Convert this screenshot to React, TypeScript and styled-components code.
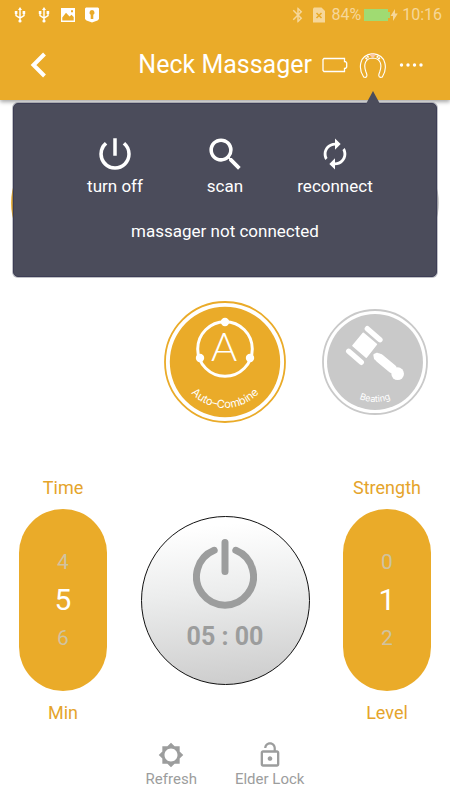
import React, { useState } from "react";
import styled, { createGlobalStyle } from "styled-components";
import {
  MdAutorenew,
  MdBluetooth,
  MdBrightness5,
  MdLockOpen,
  MdPowerSettingsNew,
  MdSearch,
} from "react-icons/md";

const AMBER = "#eaab29";
const SLATE = "#4b4c5b";
const GREY = "#9c9d9d";
const STATUS = "#f6d79a";

const GlobalStyle = createGlobalStyle`
  *, *::before, *::after { box-sizing: border-box; }
  body {
    margin: 0;
    background: #fff;
    font-family: Roboto, "Liberation Sans", sans-serif;
  }
  button {
    margin: 0;
    padding: 0;
    border: 0;
    background: none;
    color: inherit;
    font: inherit;
    cursor: pointer;
  }
  svg { display: block; flex: none; }
`;

const Screen = styled.div`
  display: flex;
  flex-direction: column;
  min-height: 100vh;
`;

const Header = styled.header`
  position: relative;
  z-index: 1;
  background: ${AMBER};
  color: #fff;
  box-shadow: 0 2px 4px rgba(0, 0, 0, 0.35);
`;

const StatusBar = styled.div`
  display: flex;
  align-items: center;
  justify-content: space-between;
  height: 30px;
  padding: 0 8px 0 12px;
`;

const Notifications = styled.div`
  display: flex;
  gap: 8px;
`;

const SystemStatus = styled.div`
  display: flex;
  align-items: center;
  color: ${STATUS};
  font-size: 16px;
  line-height: 20px;
`;

const FileBadge = styled.span`
  margin: 0 6px;
`;

const Charge = styled.span`
  display: flex;
  align-items: center;
  margin: 0 4px 0 2px;
`;

const AppBar = styled.div`
  display: flex;
  align-items: center;
  height: 70px;
  padding: 0 20px 0 23px;
`;

const Title = styled.h1`
  flex: 1;
  margin: 0 4px 0 0;
  text-align: right;
  font-size: 25px;
  line-height: 32px;
  font-weight: 400;
`;

const BarButton = styled.button`
  display: flex;
  align-items: center;
  justify-content: center;
  width: 38px;
  height: 40px;
`;

const BackButton = styled(BarButton)`
  width: 30px;
`;

const Popover = styled.section`
  position: absolute;
  top: calc(100% + 3px);
  left: 13px;
  right: 13px;
  padding: 28px 0 34px;
  border: 1px solid #3d3d55;
  border-radius: 5px;
  background: ${SLATE};
  box-shadow: 0 0 0 1px rgba(75, 76, 92, 0.35);

  &::before {
    content: "";
    position: absolute;
    right: 56px;
    bottom: 100%;
    border: solid transparent;
    border-width: 0 7px 13px;
    border-bottom-color: ${SLATE};
  }
`;

const Actions = styled.div`
  display: flex;
  justify-content: center;
`;

const ActionButton = styled.button`
  display: flex;
  flex-direction: column;
  align-items: center;
  width: 110px;
  font-size: 17px;
  line-height: 20px;
`;

const ActionIcon = styled.span`
  display: flex;
  align-items: center;
  justify-content: center;
  height: 44px;
`;

const ConnectionState = styled.p`
  margin: 24px 0 0;
  text-align: center;
  font-size: 17px;
  line-height: 22px;
`;

const Modes = styled.section`
  display: flex;
  flex-direction: column;
  gap: 37px;
  padding-top: 42px;
`;

const ModeEnds = styled.div`
  display: flex;
  align-items: center;
  justify-content: space-between;
  padding: 0 11px;
`;

const ModeRow = styled.div`
  display: grid;
  grid-template-columns: repeat(3, 1fr);
  align-items: center;
  justify-items: center;
`;

const ModeButton = styled.button<{ $column?: number }>`
  ${(p) => p.$column && `grid-column: ${p.$column};`}
  border-radius: 50%;
`;

const Controls = styled.section`
  display: flex;
  align-items: center;
  justify-content: space-between;
  padding: 53px 19px 0;
`;

const Wheel = styled.div`
  display: flex;
  flex-direction: column;
  align-items: center;
  width: 88px;
  color: #e5a42b;
  font-size: 18px;
  line-height: 24px;
`;

const WheelTrack = styled.div`
  display: flex;
  flex-direction: column;
  align-items: center;
  justify-content: center;
  width: 100%;
  height: 182px;
  margin: 9px 0 10px;
  border-radius: 44px;
  background: ${AMBER};
`;

const WheelStep = styled.button`
  width: 100%;
  color: #d0c3a0;
  font-size: 21px;
  line-height: 38px;
`;

const WheelValue = styled.output`
  color: #fff;
  font-size: 30px;
  line-height: 38px;
`;

const Dial = styled.button`
  display: flex;
  flex-direction: column;
  align-items: center;
  width: 169px;
  height: 169px;
  padding-top: 22px;
  border: 1px solid #111;
  border-radius: 50%;
  background: linear-gradient(175deg, #fff 8%, #eceded 45%, #cecece 95%);
  color: ${GREY};
  font-size: 25px;
  line-height: 28px;
  font-weight: 700;
`;

const DialTime = styled.span`
  margin-top: 12px;
`;

const Footer = styled.footer`
  display: flex;
  justify-content: center;
  gap: 38px;
  padding: 16px 0 12px;
`;

const FooterButton = styled.button`
  display: flex;
  flex-direction: column;
  align-items: center;
  color: ${GREY};
  font-size: 15px;
  line-height: 20px;
`;

const FooterIcon = styled.span`
  display: flex;
  align-items: center;
  justify-content: center;
  height: 28px;
`;

const UsbIcon = () => (
  <svg width="16" height="16" viewBox="0 0 16 16" fill="none" stroke="#fff" strokeWidth="1.4">
    <path d="M8 2v12M4 5v3.6l4 2.6 4-2.6V5" />
    <circle cx="8" cy="14" r="1.6" fill="#fff" stroke="none" />
    <path d="M8 0l2 3H6z" fill="#fff" stroke="none" />
    <path d="M2.8 4h2.6v3H2.8zM10.6 4h2.6v3h-2.6z" fill="#fff" stroke="none" />
  </svg>
);

const PictureIcon = () => (
  <svg width="16" height="16" viewBox="0 0 16 16">
    <path
      fill="#fff"
      fillRule="evenodd"
      d="M1 1h14v14H1zM2.3 13.4h11.4V10l-2.2-2.2-2 1.8L6 5.8l-3.7 4.6zM11 3.2v2h2v-2z"
    />
  </svg>
);

const ShieldIcon = () => (
  <svg width="16" height="16" viewBox="0 0 16 16">
    <path
      fill="#fff"
      fillRule="evenodd"
      d="M2 .5h12l1 1V12l-1.500 1.600L8 15.400l-5.500-1.800L1 12V1.500zM8 3a2.600 2.600 0 0 0-1.300 4.800V12h2.600V7.800A2.600 2.600 0 0 0 8 3z"
    />
  </svg>
);

const NoSimIcon = () => (
  <svg width="12" height="16" viewBox="0 0 12 16">
    <path d="M1 .5h7.500L12 4v11.500H0V1.500z" fill={STATUS} />
    <path d="M3.500 6l5 5M8.500 6l-5 5" stroke={AMBER} strokeWidth="1.600" />
  </svg>
);

const ChargeIcon = () => (
  <svg width="27" height="14" viewBox="0 0 27 14">
    <path d="M1 1h24v3h2v6h-2v3H1z" fill="#a0db72" />
  </svg>
);

const BoltIcon = () => (
  <svg width="8" height="14" viewBox="0 0 8 14">
    <path d="M5 1v4.500h2.800L3 13V8H.5z" fill={STATUS} />
  </svg>
);

const BackIcon = () => (
  <svg width="18" height="26" viewBox="0 0 18 26" fill="none" stroke="#fff" strokeWidth="4">
    <path d="M15.500 2L4.500 13l11 11" />
  </svg>
);

const BatteryIcon = () => (
  <svg width="26" height="16" viewBox="0 0 26 16" fill="none" stroke="#fff" strokeWidth="1.300">
    <path d="M2 1.500h20.500v3.200h1.200l1 1.300v4l-1 1.300h-1.200v3.200H2l-1-1v-11z" />
  </svg>
);

const MassagerIcon = () => (
  <svg width="28" height="28" viewBox="405 151 84 84" fill="none" stroke="#fff" strokeWidth="3.400">
    <path d="M419 229C404 207 402 163 446 159C491 163 489 207 475 229L470 230C462 229 464 221 467 214C476 190 468 173 446 172C425 173 417 190 426 214C429 221 431 229 424 230Z" />
    <path d="M425 175l9-9M467 175l-9-9" strokeWidth="6" strokeDasharray="5 2" />
    <path d="M438 163l8 9 8-9-8-4z" fill="#fbc9a8" stroke="#fbc9a8" strokeWidth="2" />
  </svg>
);

const MoreIcon = () => (
  <svg width="24" height="6" viewBox="0 0 24 6" fill="#fff">
    <circle cx="2.500" cy="3" r="1.700" />
    <circle cx="9" cy="3" r="1.700" />
    <circle cx="15.500" cy="3" r="1.700" />
    <circle cx="22" cy="3" r="1.700" />
  </svg>
);

const ModeDisc = ({
  size,
  color,
  children,
}: {
  size: number;
  color: string;
  children?: React.ReactNode;
}) => {
  const c = size / 2;
  return (
    <svg width={size} height={size} viewBox={`0 0 ${size} ${size}`}>
      <circle cx={c} cy={c} r={c - 1} fill="#fff" stroke={color} strokeWidth="1.800" />
      <circle cx={c} cy={c} r={c * 0.905} fill={color} />
      {children}
    </svg>
  );
};

const AutoCombineDisc = () => (
  <ModeDisc size={122} color={AMBER}>
    <circle cx="61" cy="48" r="27.300" fill="none" stroke="#fff" strokeWidth="3" />
    <circle cx="61" cy="21" r="4.200" fill="#fff" />
    <circle cx="36" cy="57" r="4.200" fill="#fff" />
    <circle cx="86" cy="57" r="4.200" fill="#fff" />
    <text x="60" y="60" textAnchor="middle" fill="#fff" fontFamily="Lato, sans-serif" fontSize="40" fontWeight="300">
      A
    </text>
    <path id="auto-arc" d="M15 61a46 46 0 0 0 92 0" fill="none" />
    <text fill="#fff" fontFamily="Inter, sans-serif" fontSize="11" textAnchor="middle">
      <textPath href="#auto-arc" startOffset="50%">
        Auto–Combine
      </textPath>
    </text>
  </ModeDisc>
);

const BeatingDisc = () => (
  <ModeDisc size={106} color="#c9c9c9">
    <g transform="translate(-12 -19) scale(.3333)" fill="#fff" stroke="#fff" strokeLinecap="round">
      <path d="M172 116l38 33M116 184l38 33" strokeWidth="16" />
      <path d="M160 130l39 33-30 38-40-34z" strokeWidth="5" strokeLinejoin="round" />
      <path d="M193 195l8-4 10 4-12 13-4-2z" strokeWidth="6" strokeLinejoin="round" />
      <path d="M209 205l38 31" strokeWidth="27" />
      <circle cx="263" cy="251" r="19" stroke="none" />
    </g>
    <path id="beating-arc" d="M13 53a40 40 0 0 0 80 0" fill="none" />
    <text fill="#fff" fontFamily="Inter, sans-serif" fontSize="9" textAnchor="middle">
      <textPath href="#beating-arc" startOffset="50%">
        Beating
      </textPath>
    </text>
  </ModeDisc>
);

const DialPowerIcon = () => (
  <svg width="64" height="72" viewBox="0 0 64 72" fill="none" stroke={GREY} strokeWidth="7" strokeLinecap="round">
    <path d="M21.200 11.300a28.500 28.500 0 1 0 21.600 0M32 3.500v29" />
  </svg>
);

function ValueWheel({
  label,
  unit,
  initial,
  max,
}: {
  label: string;
  unit: string;
  initial: number;
  max: number;
}) {
  const [value, setValue] = useState(initial);
  return (
    <Wheel role="group" aria-label={label}>
      <span>{label}</span>
      <WheelTrack>
        <WheelStep onClick={() => setValue(Math.max(1, value - 1))}>{value - 1}</WheelStep>
        <WheelValue>{value}</WheelValue>
        <WheelStep onClick={() => setValue(Math.min(max, value + 1))}>{value + 1}</WheelStep>
      </WheelTrack>
      <span>{unit}</span>
    </Wheel>
  );
}

export default function App() {
  return (
    <Screen>
      <GlobalStyle />
      <Header>
        <StatusBar>
          <Notifications>
            <UsbIcon />
            <UsbIcon />
            <PictureIcon />
            <ShieldIcon />
          </Notifications>
          <SystemStatus>
            <MdBluetooth size={18} />
            <FileBadge>
              <NoSimIcon />
            </FileBadge>
            <span>84%</span>
            <Charge>
              <ChargeIcon />
              <BoltIcon />
            </Charge>
            <span>10:16</span>
          </SystemStatus>
        </StatusBar>
        <AppBar>
          <BackButton aria-label="Back">
            <BackIcon />
          </BackButton>
          <Title>Neck Massager</Title>
          <BarButton as="span">
            <BatteryIcon />
          </BarButton>
          <BarButton aria-label="Massager connection">
            <MassagerIcon />
          </BarButton>
          <BarButton aria-label="More">
            <MoreIcon />
          </BarButton>
        </AppBar>
        <Popover>
          <Actions>
            <ActionButton>
              <ActionIcon>
                <MdPowerSettingsNew size={42} />
              </ActionIcon>
              turn off
            </ActionButton>
            <ActionButton>
              <ActionIcon>
                <MdSearch size={43} />
              </ActionIcon>
              scan
            </ActionButton>
            <ActionButton>
              <ActionIcon>
                <MdAutorenew size={34} />
              </ActionIcon>
              reconnect
            </ActionButton>
          </Actions>
          <ConnectionState>massager not connected</ConnectionState>
        </Popover>
      </Header>
      <main>
        <Modes>
          <ModeEnds>
            <ModeDisc size={122} color={AMBER} />
            <ModeDisc size={106} color="#c9c9c9" />
          </ModeEnds>
          <ModeRow>
            <ModeButton $column={2} aria-label="Auto-Combine">
              <AutoCombineDisc />
            </ModeButton>
            <ModeButton $column={3} aria-label="Beating">
              <BeatingDisc />
            </ModeButton>
          </ModeRow>
        </Modes>
        <Controls>
          <ValueWheel label="Time" unit="Min" initial={5} max={15} />
          <Dial>
            <DialPowerIcon />
            <DialTime>05 : 00</DialTime>
          </Dial>
          <ValueWheel label="Strength" unit="Level" initial={1} max={15} />
        </Controls>
      </main>
      <Footer>
        <FooterButton>
          <FooterIcon>
            <MdBrightness5 size={26} />
          </FooterIcon>
          Refresh
        </FooterButton>
        <FooterButton>
          <FooterIcon>
            <MdLockOpen size={28} />
          </FooterIcon>
          Elder Lock
        </FooterButton>
      </Footer>
    </Screen>
  );
}
